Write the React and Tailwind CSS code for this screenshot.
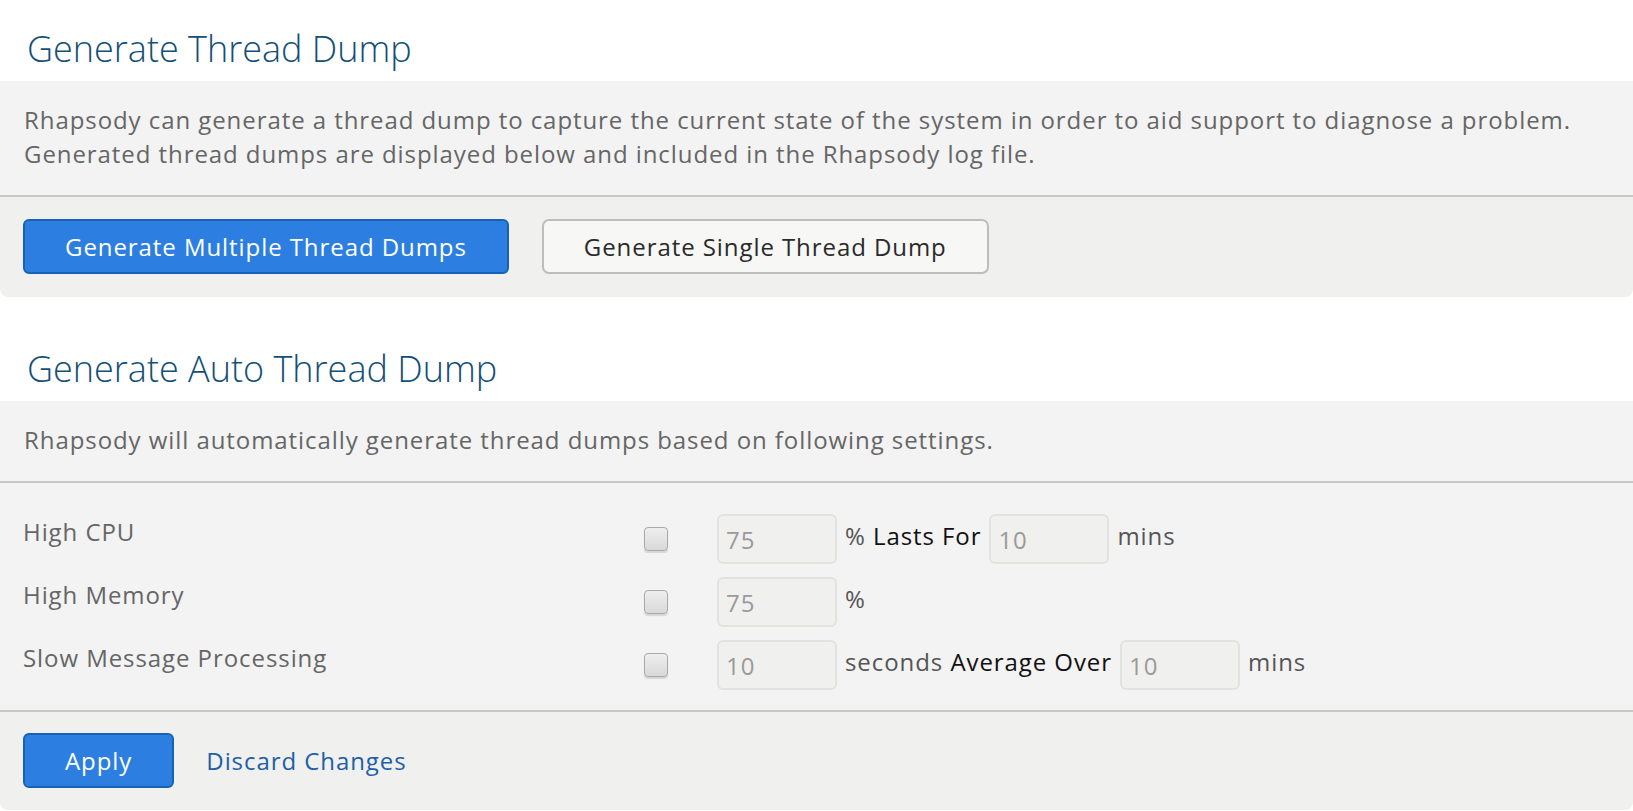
import { useState } from 'react';

function Checkbox({ checked, onChange }) {
	return (
		<button
			type="button"
			onClick={onChange}
			className="w-[24px] h-[24px] shrink-0 rounded-[4px] border border-[#a9a9a9] bg-gradient-to-b from-[#eeeeee] to-[#d9d9d9] shadow-[0_2px_1px_rgba(0,0,0,0.12)] flex items-center justify-center text-[14px] text-[#333]"
		>
			{checked ? '✓' : ''}
		</button>
	);
}

function NumberBox({ value, disabled }) {
	return (
		<input
			type="text"
			defaultValue={value}
			disabled={disabled}
			className="w-[120px] h-[50px] shrink-0 rounded-[6px] border-2 border-[#e2e2e0] bg-[#f0f0ee] px-[7px] text-[24px] tracking-[0.93px] text-[#9a9a9a] outline-none"
		/>
	);
}

function Row({ label, checked, onToggle, children }) {
	return (
		<div className="flex h-[50px]">
			<div className="w-[621px] shrink-0 pt-[1px] text-[24px] leading-[34px] text-[#666]">{label}</div>
			<div className="flex items-center">
				<Checkbox checked={checked} onChange={onToggle} />
			</div>
			<div className="ml-[49px] flex gap-[8px]">{children}</div>
		</div>
	);
}

function Text({ children }) {
	// text next to the inputs sits a bit above the middle of the row
	return <span className="pt-[5px] text-[24px] leading-[34px] text-[#555] whitespace-nowrap">{children}</span>;
}

export default function App() {
	const [cpu, setCpu] = useState(false);
	const [mem, setMem] = useState(false);
	const [slow, setSlow] = useState(false);

	return (
		<main className="min-h-screen bg-white pt-[29px] font-['Open_Sans',sans-serif] tracking-[0.93px]">
			<h2 className="pl-[27px] mb-[12px] text-[36px] leading-[40px] font-light tracking-normal text-[#134f77]">Generate Thread Dump</h2>
			<section className="rounded-b-lg bg-[#f0f0ee]">
				<div className="border-b-2 border-[#c7c7c7] bg-[#f3f3f3] pl-[24px] pt-[22px] pb-[24px] text-[24px] leading-[34px] text-[#666] whitespace-nowrap">
					Rhapsody can generate a thread dump to capture the current state of the system in order to aid support to diagnose a problem.
					<br />
					Generated thread dumps are displayed below and included in the Rhapsody log file.
				</div>
				<div className="flex gap-[33px] pl-[23px] pt-[22px] pb-[23px]">
					<button className="h-[55px] rounded-[6px] border-2 border-[#1762b4] bg-[#2c7fe1] px-[40px] text-[24px] leading-[34px] tracking-[0.93px] text-white">
						Generate Multiple Thread Dumps
					</button>
					<button className="h-[55px] rounded-[7px] border-2 border-[#bdbdbb] bg-[#f7f7f5] px-[40px] text-[24px] leading-[34px] tracking-[0.93px] text-[#2a2a2a]">
						Generate Single Thread Dump
					</button>
				</div>
			</section>

			<h2 className="pl-[27px] mt-[52px] mb-[12px] text-[36px] leading-[40px] font-light tracking-normal text-[#134f77]">Generate Auto Thread Dump</h2>
			<section className="rounded-b-lg bg-[#f0f0ee]">
				<div className="border-b-2 border-[#c7c7c7] bg-[#f3f3f3] pl-[24px] pt-[22px] pb-[24px] text-[24px] leading-[34px] text-[#666]">
					Rhapsody will automatically generate thread dumps based on following settings.
				</div>
				<div className="flex flex-col gap-[13px] border-b-2 border-[#c7c7c7] bg-[#f3f3f3] pl-[23px] pt-[31px] pb-[20px]">
					<Row label="High CPU" checked={cpu} onToggle={() => setCpu(!cpu)}>
						<NumberBox value="75" disabled={!cpu} />
						<Text>% <span className="text-[#111]">Lasts For</span></Text>
						<NumberBox value="10" disabled={!cpu} />
						<Text>mins</Text>
					</Row>
					<Row label="High Memory" checked={mem} onToggle={() => setMem(!mem)}>
						<NumberBox value="75" disabled={!mem} />
						<Text>%</Text>
					</Row>
					<Row label="Slow Message Processing" checked={slow} onToggle={() => setSlow(!slow)}>
						<NumberBox value="10" disabled={!slow} />
						<Text>seconds <span className="text-[#111]">Average Over</span></Text>
						<NumberBox value="10" disabled={!slow} />
						<Text>mins</Text>
					</Row>
				</div>
				<div className="flex items-center gap-[32px] pl-[23px] pt-[21px] pb-[22px]">
					<button className="h-[55px] rounded-[6px] border-2 border-[#1762b4] bg-[#2c7fe1] px-[40px] text-[24px] leading-[34px] tracking-[0.93px] text-white">
						Apply
					</button>
					<a href="#" className="text-[24px] leading-[34px] text-[#1d60a8]">Discard Changes</a>
				</div>
			</section>
		</main>
	);
}
